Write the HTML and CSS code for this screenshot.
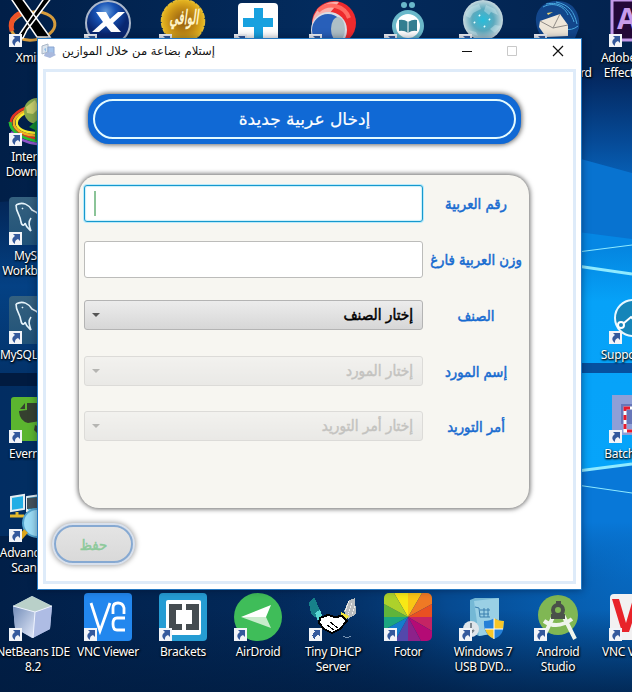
FILE: index.html
```html
<!DOCTYPE html>
<html lang="ar">
<head>
<meta charset="utf-8">
<title>إستلام بضاعة من خلال الموازين</title>
<link rel="stylesheet" href="styles.css">
</head>
<body>
<svg class="defs" aria-hidden="true">
  <defs>
    <linearGradient id="beam" x1="0" y1="0" x2="0" y2="1"><stop offset="0" stop-color="#03245a"/><stop offset=".14" stop-color="#064b98"/><stop offset=".3" stop-color="#087ee0"/><stop offset=".58" stop-color="#0784e4"/><stop offset=".84" stop-color="#0659ac"/><stop offset="1" stop-color="#043a78" stop-opacity="0"/></linearGradient>
    <radialGradient id="ball" cx=".45" cy=".25"><stop offset="0" stop-color="#679ddd"/><stop offset=".45" stop-color="#1752b4"/><stop offset="1" stop-color="#092771"/></radialGradient>
    <radialGradient id="gold"><stop offset="0" stop-color="#8d5710"/><stop offset=".65" stop-color="#c99216"/><stop offset="1" stop-color="#e8b822"/></radialGradient>
    <radialGradient id="moon"><stop offset="0" stop-color="#27bddb"/><stop offset=".55" stop-color="#5ca9bd"/><stop offset="1" stop-color="#c8d9df"/></radialGradient>
    <linearGradient id="cube" x1="0" y1="0" x2="1" y2="1"><stop offset="0" stop-color="#718cb8"/><stop offset="1" stop-color="#e4eafa"/></linearGradient>
    <linearGradient id="sql" x1="0" y1="0" x2="0" y2="1"><stop offset="0" stop-color="#35617f"/><stop offset="1" stop-color="#205278"/></linearGradient>
    <linearGradient id="glow" x1="0" y1="0" x2="0" y2="1"><stop offset="0" stop-color="#0484df"/><stop offset=".25" stop-color="#06a2f8"/><stop offset="1" stop-color="#06a4fa"/></linearGradient>
    <symbol id="arrow" viewBox="0 0 13 13"><rect width="13" height="13" fill="#f2f4f8"/><path d="M4 2h7v7L9 7C6 8 6 10 6 12 2 9 3 6 6 4Z" fill="#34599c"/></symbol>
    <symbol id="dolphin" viewBox="0 0 48 48"><rect width="48" height="48" rx="4" fill="url(#sql)"/><path d="M7 8C14 4 20 8 23 13c8 3 13 10 16 19M7 8c0 8 4 9 5 17 1 5 4 3 4 1 1 4 4 6 6 8-2-6-3-9 0-13M13 11l1 1" fill="none" stroke="#e6f4fb" stroke-width="1.6"/></symbol>
  </defs>
</svg>
<main class="desktop">
  <svg class="wallpaper" viewBox="0 0 632 692" preserveAspectRatio="none">
    <defs><linearGradient id="night" x1="0" x2="1"><stop offset="0" stop-color="#011f48"/><stop offset=".5" stop-color="#032b5d"/><stop offset="1" stop-color="#03234f"/></linearGradient>
    <linearGradient id="left" x1="0" y1="0" x2="0" y2="1"><stop offset="0" stop-color="#032657"/><stop offset=".5" stop-color="#044184"/><stop offset="1" stop-color="#03336b"/></linearGradient>
    <radialGradient id="low" gradientUnits="userSpaceOnUse" cx="632" cy="560" r="380"><stop offset="0" stop-color="#076bc4"/><stop offset=".5" stop-color="#064a91"/><stop offset="1" stop-color="#032a5b" stop-opacity="0"/></radialGradient>
    <linearGradient id="fade" x1="0" y1="0" x2="0" y2="1"><stop offset="0" stop-color="#011c40" stop-opacity="0"/><stop offset="1" stop-color="#011c40" stop-opacity=".75"/></linearGradient>
    <linearGradient id="dusk" x1="0" y1="0" x2="0" y2="1"><stop offset="0" stop-color="#0878d8"/><stop offset=".5" stop-color="#0878d8"/><stop offset="1" stop-color="#076bc4" stop-opacity="0"/></linearGradient></defs>
    <path fill="url(#night)" d="M0 0h632v692H0z"/>
    <path fill="url(#left)" d="M0 202l40-3v174H0z"/><path fill="#011b40" d="M0 373h40v13H0z"/><path fill="#03336b" d="M0 386h40v150H0z" opacity=".75"/>
    <path fill="url(#beam)" d="M570 70h62v520h-62z"/>
    <path fill="url(#low)" d="M200 500h432v192H200z"/><path fill="url(#fade)" d="M0 610h632v82H0z"/>
    <path fill="#0873d0" d="M570 156l62 17v80h-62z"/><path fill="#0587e4" d="M570 231l62 8v20h-62z"/>
    <path fill="url(#glow)" d="M570 252l62-7v118h-62zM570 373h62v93l-62 7z"/>
    <path fill="#06509f" d="M570 363h62v10h-62z"/>
    <path fill="url(#dusk)" d="M570 473l62-9v116h-62z"/>
    <g stroke="#8feaff" fill="none"><path stroke-width="3" d="M570 265l62 9M570 472l62-8"/><path stroke-width="1" d="M570 253l62-8M570 484l62 9"/></g>
  </svg>

  <div class="shortcut c0 r0"><svg viewBox="0 0 48 48"><ellipse cx="24" cy="27" rx="22" ry="14" fill="none" stroke="#d69c3d" stroke-width="3" transform="rotate(-8 24 27)"/><path d="M3 32C-1 18 12 12 19 14" fill="none" stroke="#ef5428" stroke-width="5"/><path d="M1-2h11l29 40H28zM36-2h7L18 31l-4 8H8z" fill="#000" stroke="#fff" stroke-width="1.5"/><use href="#arrow" y="35" width="13" height="13"/></svg><span>Xming</span></div>
  <div class="shortcut c1 r0"><svg viewBox="0 0 48 48"><circle cx="24" cy="24" r="22" fill="url(#ball)" stroke="#acb8cb" stroke-width="2"/><path d="M12 13h10l4 7 8-7h7L29 24l8 9H27l-5-6-7 6H8l11-10z" fill="#fff"/><use href="#arrow" y="35" width="13" height="13"/></svg></div>
  <div class="shortcut c2 r0"><svg viewBox="0 0 48 48"><circle cx="24" cy="22" r="21.500" fill="url(#gold)" stroke="#e4bb31" stroke-width="1.500" stroke-dasharray="5 1"/><text x="0" y="0" class="seal" text-anchor="middle" transform="translate(25 25) scale(.72 1.300)">الوافي</text><use href="#arrow" y="35" width="13" height="13"/></svg></div>
  <div class="shortcut c3 r0"><svg viewBox="0 0 48 48"><rect x="4" y="4" width="40" height="44" rx="4" fill="#fff"/><path d="M20 9h9v10h10v9H29v12h-9V28H9v-9h11z" fill="#18a1df"/><use href="#arrow" y="35" width="13" height="13"/></svg></div>
  <div class="shortcut c4 r0"><svg viewBox="0 0 48 48"><circle cx="25" cy="24" r="22" fill="#ee2a2d"/><path d="M3 32C1 12 15 1 30 3L20 15z" fill="#f7b1ad"/><path d="M9 12C20 2 36 7 40 19" fill="none" stroke="#ff6b62" stroke-width="4"/><circle cx="20" cy="31" r="18" fill="#d9dde6"/><circle cx="19" cy="31" r="16" fill="#285fb9"/><ellipse cx="29" cy="30" rx="7" ry="12" fill="#aebfc6"/><use href="#arrow" y="35" width="13" height="13"/></svg></div>
  <div class="shortcut c5 r0"><svg viewBox="0 0 48 48"><g fill="#6ab8ca"><circle cx="20" cy="6" r="3"/><circle cx="28" cy="6" r="3"/><circle cx="24" cy="27" r="16"/></g><circle cx="24" cy="27" r="12" fill="#fff"/><path d="M15 21q5-1 9 2 5-3 9-2v11q-5-1-9 2-4-3-9-2z" fill="#347e91"/><path d="M24 23v12" stroke="#fff"/><use href="#arrow" y="35" width="13" height="13"/></svg></div>
  <div class="shortcut c6 r0"><svg viewBox="0 0 48 48"><circle cx="24" cy="21" r="20" fill="url(#moon)"/><path d="M7 14l5-6 8-3 2 5-8 4-3 5-4-2zM27 6l9 4 3 6-7-3-2 3-5-4zM9 31l8 2 2 4-6-2zM31 30l5-4 6 1-6 7z" fill="#d4eef2" opacity=".4"/><path d="M20 16l1 1m9 3 1 1m-6 6 1 1m-11-5 1 1" stroke="#eaffff" stroke-width="2"/><use href="#arrow" y="35" width="13" height="13"/></svg></div>
  <div class="shortcut c7 r0"><svg viewBox="0 0 48 48"><path d="M2 23C1 10 11 1 24 2c16 0 23 14 21 27L39 44H17C8 41 3 33 2 23z" fill="#12468b"/><path d="M9 8C20 2 31 8 34 16M12 5c14-3 24 5 28 18M22 3c14 3 18 10 21 22M30 30q8 2 14-3" stroke="#49a9df" fill="none"/><path d="M6 22l20-7 8 11v11l-22 1L5 28z" fill="#eee6d9"/><path d="M6 22l13 7 7-14m-7 14 15-3" fill="none" stroke="#8e8a86"/><path d="M13 14l6-1-5 3z" fill="#ead26f"/><use href="#arrow" y="35" width="13" height="13"/></svg><span class="bird">Mozilla<br>Thunderbird</span></div>
  <div class="shortcut c8 r0"><svg viewBox="0 0 48 48"><path d="M3 1h45v40H3z" fill="#240838" stroke="#c49ae9" stroke-width="3"/><text x="8" y="30" class="ae">Ae</text><use href="#arrow" y="35" width="13" height="13"/></svg><span>Adobe After<br>Effects CS6</span></div>

  <div class="shortcut c0 r1"><svg viewBox="0 0 48 48"><g fill="none" stroke-width="2.500"><path d="M26 8C12 9 0 18 2 27q4 12 28 14" stroke="#e43122"/><path d="M26 10.500C14 12 3 19 5 27q4 10 25 11" stroke="#f5ad21"/><path d="M24 13C15 14 6 20 8 27q4 8 22 8" stroke="#f5ed2d"/><path d="M1 24q1 15 31 20" stroke="#27bd35" stroke-width="3"/><path d="M2 34q10 10 26 12" stroke="#8e55c8"/></g><circle cx="28" cy="13" r="13" fill="#86a84b"/><path d="M17 9l9-7 4 8-6 6-6-1z" fill="#c7cf6c"/><path d="M20 29l12-10v25l-6-1V32z" fill="#138a2e"/><use href="#arrow" y="35" width="13" height="13"/></svg><span>Internet<br>Download</span></div>
  <div class="shortcut c0 r2"><svg viewBox="0 0 48 48"><use href="#dolphin" width="48" height="48"/><use href="#arrow" y="35" width="13" height="13"/></svg><span>MySQL<br>Workbench</span></div>
  <div class="shortcut c0 r3"><svg viewBox="0 0 48 48"><use href="#dolphin" width="48" height="48"/><use href="#arrow" y="35" width="13" height="13"/></svg><span>MySQL Not..</span></div>
  <div class="shortcut c0 r4"><svg viewBox="0 0 48 48"><rect x="2" y="2" width="44" height="44" rx="3" fill="#5bb52f"/><path d="M10 16l8-1V8h10q8 0 10 10v21h-9l-4-4 1-5 7 3-2-7-12 2q-8-2-9-11zM11 14l5-6v6z" fill="#35402f"/><use href="#arrow" y="35" width="13" height="13"/></svg><span>Evernote</span></div>
  <div class="shortcut c0 r5"><svg viewBox="0 0 48 48"><path d="M2 3l13-2v14L2 17zM18 3l14-2v14l-14 2z" fill="#22aee5" stroke="#e4edf2" stroke-width="2"/><path d="M18 4l12-1v11l-12 1z" fill="#44515a"/><path d="M1 22h14m-7-4v4m10 0h12" stroke="#e4b82d" stroke-width="3"/><circle cx="28" cy="29" r="14" fill="#9bdcf6" stroke="#54a4ce" stroke-width="2"/><path d="M10 45l7-8" stroke="#dda51b" stroke-width="5"/><use href="#arrow" y="35" width="13" height="13"/></svg><span>Advanced IP<br>Scanner</span></div>
  <div class="shortcut c8 r3"><svg viewBox="0 0 48 48"><circle cx="24" cy="22" r="18" fill="#1585b9" stroke="#e7f8ff" stroke-width="2"/><path d="M9 29a3 3 0 1 0 6 0 3 3 0 0 0-6 0m6-2 7-6 2 2 7-7" fill="none" stroke="#fff" stroke-width="2"/><use href="#arrow" y="35" width="13" height="13"/></svg><span>SupportAss.</span></div>
  <div class="shortcut c8 r4"><svg viewBox="0 0 48 48"><rect x="3" y="0" width="44" height="40" fill="#8e9fd7"/><path fill="#6777b9" d="M12 9h36v20H12z"/><rect x="16" y="13" width="28" height="23" fill="none" stroke="#fff" stroke-width="3"/><rect x="16" y="13" width="28" height="23" fill="none" stroke="#e71b2d" stroke-width="3" stroke-dasharray="5 4"/><use href="#arrow" y="35" width="13" height="13"/></svg><span>Batch Ima.</span></div>

  <div class="shortcut c0 r6"><svg viewBox="0 0 48 48"><path d="M4 13L23 3l20 10-2 23-18 9L6 35z" fill="#b9c6e6"/><path d="M4 13L23 3l20 10-17 6z" fill="#b9d0c9"/><path d="M4 13l22 6-2 26L6 35z" fill="url(#cube)"/><path d="M26 19l17-6-2 23-17 9z" fill="#aebce4"/><path d="M4 13l22 6 17-6m-17 6-2 26" stroke="#f0f5ff" fill="none"/><use href="#arrow" y="35" width="13" height="13"/></svg><span>NetBeans IDE<br>8.2</span></div>
  <div class="shortcut c1 r6"><svg viewBox="0 0 48 48"><rect width="48" height="48" rx="4" fill="#2287ee"/><path d="M7 10l9 28 10-28M29 21v-6q0-5 5-5t6 5v6M41 25h-8q-4 0-4 6t4 6h8" fill="none" stroke="#fff" stroke-width="2.8"/><use href="#arrow" y="35" width="13" height="13"/></svg><span>VNC Viewer</span></div>
  <div class="shortcut c2 r6"><svg viewBox="0 0 48 48"><rect width="48" height="48" rx="4" fill="#259cd3"/><rect x="7" y="7" width="35" height="35" rx="2" fill="#fff"/><path d="M10 11h13v6h-6v14h6v6H10zM27 11h13v26H27v-6h6V17h-6z" fill="#454c50"/><use href="#arrow" y="35" width="13" height="13"/></svg><span>Brackets</span></div>
  <div class="shortcut c3 r6"><svg viewBox="0 0 48 48"><circle cx="24" cy="24" r="24" fill="#3fbd59"/><path d="M7 24l30-12-5 12z" fill="#fff"/><path d="M7 24l30 11-5-11z" fill="#c9eccc"/><use href="#arrow" y="35" width="13" height="13"/></svg><span>AirDroid</span></div>
  <div class="shortcut c4 r6"><svg viewBox="0 0 48 48" shape-rendering="crispEdges"><path d="M0 10l5-6 6 13-2 9-7-5z" fill="#17818a"/><path d="M46 5l-6 2-5 11 4 8 8-5z" fill="#b9bdbf"/><path d="M40 8l-4 11m7-9-4 12m7-9-3 9" stroke="#eee" stroke-dasharray="2 1"/><path d="M6 20l5-3 3 8-5 3z" fill="#59d8d3"/><path d="M32 19l8 4-3 5-4-3z" fill="#eee33e"/><path d="M11 25l8-3 7 2 7-1 5 5-7 8-8 4-8-4-5-6z" fill="#fff" stroke="#000" stroke-width="2"/><path d="M21 29l8 6m-11-3 7 5" stroke="#000" fill="none"/><path d="M34 43q4 3 8 0" stroke="#7894b4" fill="none"/><use href="#arrow" y="35" width="13" height="13"/></svg><span>Tiny DHCP<br>Server</span></div>
  <div class="shortcut c5 r6"><svg viewBox="0 0 48 48"><clipPath id="round"><rect width="48" height="48" rx="5"/></clipPath><g clip-path="url(#round)"><path fill="#f8e816" d="M10 0h14v24z"/><path fill="#f9c515" d="M24 0h14L24 24z"/><path fill="#ef7924" d="M38 0h10v11L24 24z"/><path fill="#e95022" d="M48 11v13H24z"/><path fill="#c52464" d="M48 24v14L24 24z"/><path fill="#b40b75" d="M48 38v10H37L24 24z"/><path fill="#8d218a" d="M37 48H24V24z"/><path fill="#5348ab" d="M24 48H11l13-24z"/><path fill="#147ccc" d="M11 48H0V37l24-13z"/><path fill="#1ca680" d="M0 37V24h24z"/><path fill="#60b43b" d="M0 24V11l24 13z"/><path fill="#add12b" d="M0 11V0h10l14 24z"/></g><use href="#arrow" y="35" width="13" height="13"/></svg><span>Fotor</span></div>
  <div class="shortcut c6 r6"><svg viewBox="0 0 48 48"><path d="M11 7l5-2h23v35l-19 3-9-4z" fill="#74b8d5"/><path d="M15 8l25-3v34l-20 4z" fill="#9ad0e5"/><path d="M16 14l4 1 1 9h10m-10-7h10m-10 4h9m-5-6v9m4-9v9" stroke="#397eae" fill="none"/><circle cx="12" cy="36" r="8" fill="#dfe5ea"/><path d="M12 30v10m-3-3 3 3 3-3" stroke="#7d8790" stroke-width="2"/><path d="M25 28q7 0 10-3 4 3 10 3 1 14-10 18-11-5-10-18" fill="#2580d7"/><path d="M35 25q4 3 10 3l-1 8h-9zM26 36h9v10q-7-3-9-10" fill="#f8c628"/><path d="M26 36h18M35 25v21" stroke="#fff"/><use href="#arrow" y="35" width="13" height="13"/></svg><span>Windows 7<br>USB DVD...</span></div>
  <div class="shortcut c7 r6"><svg viewBox="0 0 48 48"><circle cx="24" cy="22" r="20" fill="#80b754"/><path d="M20 22L10 43m19-21 12 24M10 28q13 9 28-2" fill="none" stroke="#eff4ec" stroke-width="4"/><circle cx="24" cy="17" r="5" fill="none" stroke="#4a504a" stroke-width="4"/><path d="M22 8h5v4h-5zM17 21h14v5H17z" fill="#4a504a"/><use href="#arrow" y="35" width="13" height="13"/></svg><span>Android<br>Studio</span></div>
  <div class="shortcut c8 r6"><svg viewBox="0 0 48 48"><rect x="1" y="1" width="47" height="46" rx="4" fill="#f2f1f2"/><path d="M3 6h7l7 24L24 6h7L20 39h-7z" fill="#e8232a"/><use href="#arrow" y="35" width="13" height="13"/></svg><span>VNC Viewer</span></div>

  <section class="window" dir="rtl">
    <header class="titlebar" dir="ltr">
      <svg class="app-icon" viewBox="0 0 16 16"><path d="M1 3l6-2v8l-6 2z" fill="#dce5ee" stroke="#a9b6c6"/><path d="M7 4h6v7H7z" fill="#a5c3ea" stroke="#8ba5cf"/><path d="M4 10l7-1 4 3-6 3-6-2z" fill="#a9b9dd"/><path d="M3 6l2-1v4" fill="#8ebde6"/></svg>
      <h1 dir="rtl">إستلام بضاعة من خلال الموازين</h1>
      <svg class="controls" viewBox="0 0 110 20"><path d="M4 10.5h10" stroke="#111"/><path d="M49.5 5.500h9v9h-9z" fill="none" stroke="#c9c9c9"/><path d="M95 5l10 10m0-10L95 15" stroke="#111" stroke-width="1.2"/></svg>
    </header>
    <div class="content">
      <h2 class="banner"><span>إدخال عربية جديدة</span></h2>
      <form class="panel">
        <label for="number">رقم العربية</label><div class="field focused" id="number"><i class="caret"></i></div>
        <label>وزن العربية فارغ</label><div class="field"></div>
        <label>الصنف</label><div class="combo"><span>إختار الصنف</span><i></i></div>
        <label>إسم المورد</label><div class="combo disabled"><span>إختار المورد</span><i></i></div>
        <label>أمر التوريد</label><div class="combo disabled"><span>إختار أمر التوريد</span><i></i></div>
      </form>
      <button class="save" type="button" disabled>حفظ</button>
    </div>
  </section>
</main>
</body>
</html>
```
FILE: styles.css
```css
* { box-sizing: border-box; }
body { margin: 0; overflow: hidden; }
.defs { position: absolute; width: 0; height: 0; }
.desktop { position: relative; width: 632px; height: 692px; overflow: hidden; font-family: "Noto Sans", "Open Sans", sans-serif; }
.wallpaper { display: block; width: 632px; height: 692px; }

.shortcut { position: absolute; width: 76px; display: flex; flex-direction: column; align-items: center; }
.shortcut svg { width: 48px; height: 48px; flex: none; overflow: visible; }
.shortcut span { margin-top: 3px; color: #fff; font-size: 12px; line-height: 15px; letter-spacing: -.3px; text-align: center; white-space: nowrap; text-shadow: 1px 1px 2px #000, 0 1px 2px #000; }
.c0 { left: -5px; } .c1 { left: 70px; } .c2 { left: 145px; }
.c3 { left: 220px; } .c4 { left: 295px; } .c5 { left: 370px; }
.c6 { left: 445px; } .c7 { left: 520px; } .c8 { left: 595px; }
.r0 { top: -1px; } .r1 { top: 98px; } .r2 { top: 197px; }
.r3 { top: 296px; } .r4 { top: 395px; } .r5 { top: 494px; } .r6 { top: 593px; }
.seal { font: italic bold 15px "DejaVu Sans", sans-serif; fill: #fff4c7; }
.ae { font: bold 29px "Open Sans", sans-serif; fill: #c79bea; }

.window { position: absolute; left: 37px; top: 38px; width: 545px; height: 552px; background: #fff; border: 1px solid #2579c3; padding: 0 5px 5px; display: flex; flex-direction: column; font-family: "DejaVu Sans", sans-serif; box-shadow: 0 0 8px rgba(0, 10, 35, .45); }
.titlebar { height: 30px; flex: none; display: flex; align-items: flex-start; }
.app-icon { width: 16px; height: 16px; margin: 4px 0 0 -2px; }
.titlebar h1 { margin: 2px 0 0 4px; width: 154px; font-size: 11.6px; line-height: 20px; font-weight: 400; color: #111; white-space: nowrap; }
.controls { width: 110px; height: 20px; margin: 2px 8px 0 auto; }
.content { flex: 1; border: 3px solid #deebf9; padding: 22px 44px 0 33px; display: flex; flex-direction: column; }
.banner { width: 433px; height: 50px; margin: 0 8px 0 0; padding: 5px; border-radius: 21px; background: #1069d5; box-shadow: 0 0 5px 1px rgba(0, 0, 0, .6); font-size: 17px; font-weight: 400; color: #fff; -webkit-text-stroke: .2px; }
.banner span { height: 40px; display: flex; align-items: center; justify-content: center; border: 2px solid #e4fbff; border-radius: 20px; }
.panel { width: 450px; height: 333px; flex: none; margin: 31px 0 0; padding: 10px 0 0 5px; border-radius: 20px; background: #f7f6f1; box-shadow: 0 0 5px 1px rgba(0, 0, 0, .6); display: grid; grid-template-columns: 106px 339px; grid-template-rows: 37px 56px 56px 56px 55px; align-items: end; align-content: start; font-family: "DejaVu Sans Condensed", "DejaVu Sans", sans-serif; }
.panel label { color: #176bd0; font-size: 14.7px; -webkit-text-stroke: .5px; line-height: 37px; text-align: center; white-space: nowrap; }
.field { height: 37px; border: 1px solid #bcbcba; border-radius: 3px; background: #fff; }
.focused { border-color: #1798cd; box-shadow: 0 0 0 1px #b9eafa, inset 0 0 1px 1px #c9eff9; direction: ltr; padding: 5px 9px; }
.caret { display: block; width: 2px; height: 25px; background: #8bc498; }
.combo { height: 30px; margin-bottom: 4px; border: 1px solid #b4b4b4; border-radius: 3px; background: linear-gradient(#ececec, #d7d7d7); display: flex; align-items: center; justify-content: space-between; padding: 0 9px 0 7px; color: #000; font-size: 15.2px; -webkit-text-stroke: .5px; }
.combo i { border: 4px solid transparent; border-top-color: #555; border-bottom: 0; }
.disabled { opacity: .4; color: #777; }
.save { width: 79px; height: 38px; margin: 17px auto 0 -25px; align-self: flex-end; border: 2px solid #86a9d2; border-radius: 19px; background: linear-gradient(#e4e4e4, #d9d9d9); color: #8cc99a; font: 400 14.7px "DejaVu Sans Condensed", "DejaVu Sans", sans-serif; -webkit-text-stroke: .5px; box-shadow: 0 0 0 2px #d8e0ec, 0 0 5px 3px #aaa; }
```
